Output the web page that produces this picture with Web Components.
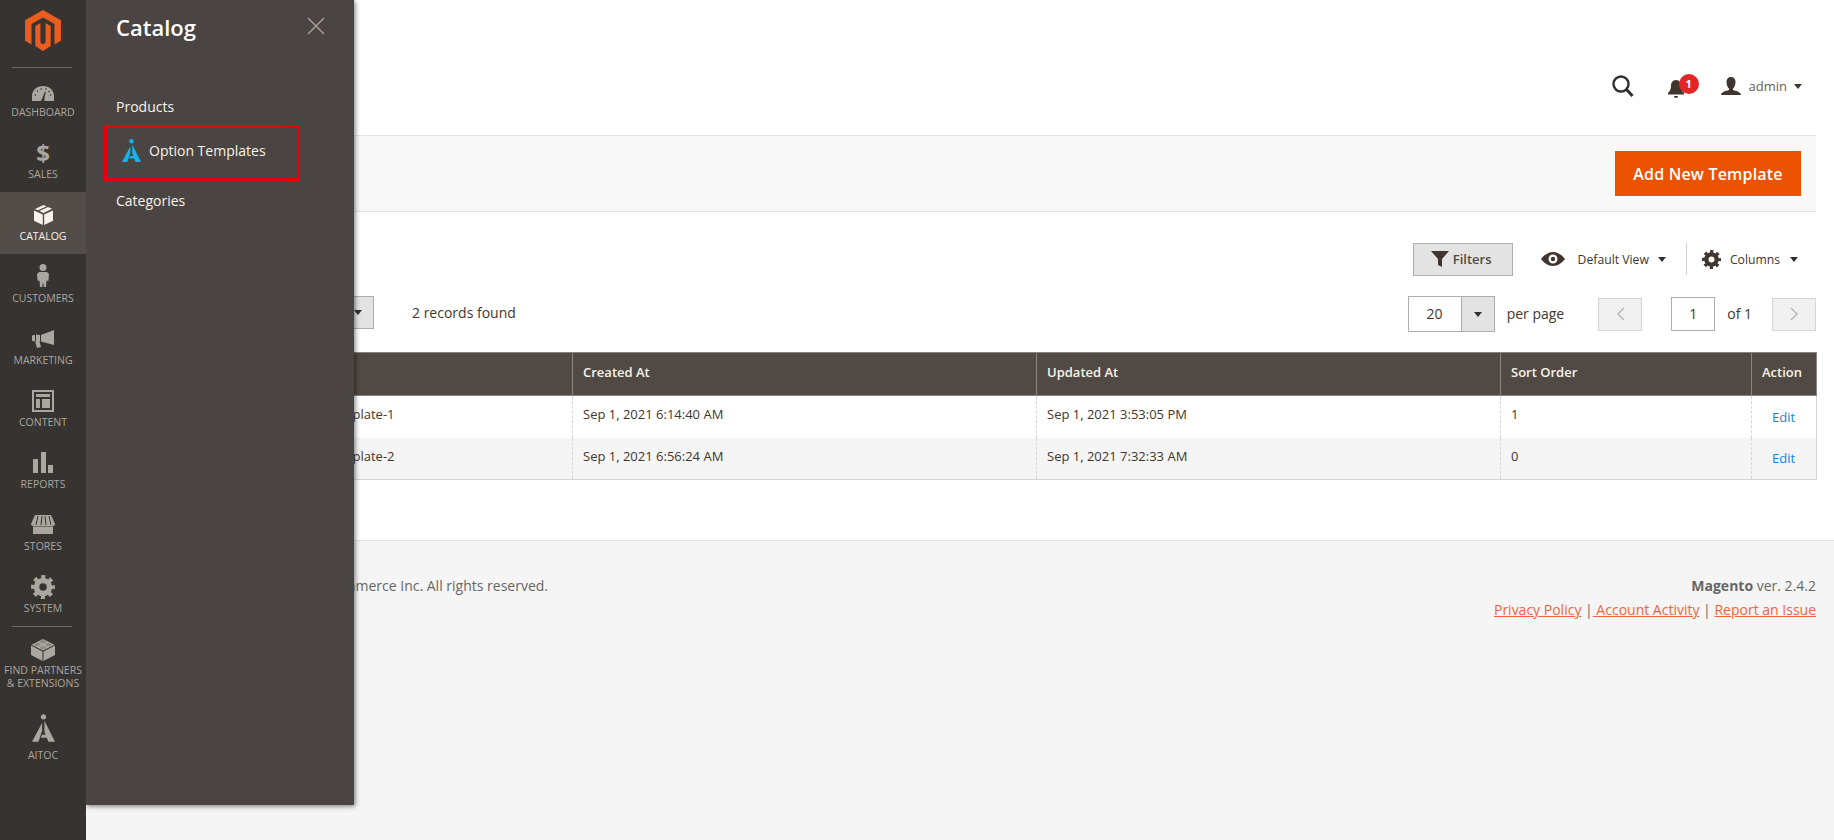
<!DOCTYPE html>
<html>
<head>
<meta charset="utf-8">
<title>Option Templates</title>
<style>
html, body { margin: 0; height: 100%; }
body { font-family: "Open Sans", "Liberation Sans", sans-serif; font-size: 14px; color: #41362f; overflow: hidden; background: #fff; }
svg { display: block; }
</style>
</head>
<body>
<admin-app>
  <admin-sidebar slot="sidebar">
    <nav-item label="Dashboard">
      <svg width="22" height="15" viewBox="0 0 22 15" fill="currentColor" style="margin-top:6px"><path fill-rule="evenodd" d="M11 0C5 0 0 4 0 10v5h8.800l.9-1.500L13 5.500l.8.300-1.500 7.700.3 1.500H22v-5C22 4 17 0 11 0z"/><g fill="#373330"><circle cx="3.500" cy="9" r=".8"/><circle cx="5.500" cy="5" r=".8"/><circle cx="9" cy="3" r=".8"/><circle cx="14" cy="3" r=".8"/><circle cx="18.500" cy="9" r=".8"/><circle cx="17" cy="5.500" r=".8"/></g></svg>
    </nav-item>
    <nav-item label="Sales"><span style="font:700 24px/24px 'Open Sans',sans-serif">$</span></nav-item>
    <nav-item label="Catalog" active>
      <svg width="19" height="20" viewBox="0 0 19 20" fill="currentColor"><path d="M0 5.500 8.800 9.400V20L0 15.800zM19 5.500 10.200 9.400V20L19 15.800zM9.500 0 12.500 1.300 4 5.200 1 4zM14 2 18 3.800 9.500 7.900 5.500 6z"/></svg>
    </nav-item>
    <nav-item label="Customers">
      <svg width="12" height="23" viewBox="0 0 12 23" fill="currentColor" style="margin-bottom:2px"><circle cx="6" cy="3.500" r="3.500"/><path d="M2 8h8l2 2-.6 7-1.900-.5L9 23H6.800L6 18l-.8 5H3l-.5-6.500-1.900.5L0 10z"/></svg>
    </nav-item>
    <nav-item label="Marketing">
      <svg width="22" height="18" viewBox="0 0 22 18" fill="currentColor"><path d="M22 0v15L9 11.500V5zM0 5.500 3 4.800v6.700L0 10.800zM4 4.600 8 5v6.500l-.5 0L9 17l-4 1-1.800-6.600L4 11.300z"/></svg>
    </nav-item>
    <nav-item label="Content">
      <svg width="22" height="22" viewBox="0 0 22 22" fill="currentColor"><path fill-rule="evenodd" d="M0 0h22v22H0zM2 2v18h18V2z"/><path d="M4 4h14v3H4zM4 9h4v9H4zM10 9h8v9h-8z"/></svg>
    </nav-item>
    <nav-item label="Reports">
      <svg width="20" height="21" viewBox="0 0 20 21" fill="currentColor"><path d="M0 7h5v14H0zM8 0h5v21H8zM15 13h5v8h-5z"/></svg>
    </nav-item>
    <nav-item label="Stores">
      <svg width="24" height="19" viewBox="0 0 24 19" fill="currentColor"><path d="M4 0h16l4 9c0 1.500-1.500 2-3 2H3c-1.500 0-3-.5-3-2z"/><path d="M2 11.500h20V19H2z"/><path d="M7 1 5 10M11 1l-1 9M14 1l1 9M18 1l2 9" stroke="#373330" stroke-width="1"/></svg>
    </nav-item>
    <nav-item label="System">
      <svg width="24" height="24" viewBox="0 0 24 24" fill="none" stroke="currentColor"><circle cx="12" cy="12" r="6.500" stroke-width="5.500"/><circle cx="12" cy="12" r="10" stroke-width="4" stroke-dasharray="4 3.850" stroke-dashoffset="2"/></svg>
    </nav-item>
    <sidebar-divider></sidebar-divider>
    <nav-item label="Find Partners<br>&amp; Extensions" style="--item-h:74px;--icon-h:24px">
      <svg width="24" height="23" viewBox="0 0 24 23" fill="currentColor"><path d="M0 7.500 11.500 13.500V23L0 17zM24 7.500 12.500 13.500V23L24 17z"/><path d="M12 1 23.500 6.800 12 12.500.5 6.800z"/><g fill="#8f8b84"><ellipse cx="12" cy="3.500" rx="3" ry="1.500"/><ellipse cx="6.500" cy="6.500" rx="3" ry="1.500"/><ellipse cx="17.500" cy="6.500" rx="3" ry="1.500"/><ellipse cx="12" cy="9.500" rx="3" ry="1.500"/></g></svg>
    </nav-item>
    <nav-item label="Aitoc" style="--item-h:68px;--icon-h:33px;--item-mt:2px">
      <aitoc-logo size="28" style="margin-bottom:3px"></aitoc-logo>
    </nav-item>
  </admin-sidebar>

  <catalog-flyout slot="flyout" heading="Catalog">
    <flyout-link>Products</flyout-link>
    <flyout-link marked><aitoc-logo slot="icon" size="23" style="color:#12b5ea"></aitoc-logo>Option Templates</flyout-link>
    <flyout-link>Categories</flyout-link>
  </catalog-flyout>

  <top-bar></top-bar>
  <page-actions>Add New Template</page-actions>
  <grid-tools></grid-tools>
  <pager-row></pager-row>
  <data-grid></data-grid>
  <page-footer slot="footer"></page-footer>
</admin-app>

<script>
// small helper, every component just sets its markup in the constructor
class Base extends HTMLElement {
  constructor() {
    super();
    this.attachShadow({ mode: 'open' });
    this.shadowRoot.innerHTML = this.markup();
  }
  markup() { return ''; }
}

class AdminApp extends Base {
  markup() {
    return `<style>
      :host { display: flex; height: 840px; position: relative; overflow: hidden; }
      .main { flex: 1; min-width: 0; display: flex; flex-direction: column; background: #fff; }
      .page { width: 1730px; box-sizing: border-box; height: 540px; flex: none; }
    </style>
    <slot name="sidebar"></slot>
    <slot name="flyout"></slot>
    <div class="main">
      <div class="page"><slot></slot></div>
      <slot name="footer"></slot>
    </div>`;
  }
}

class AdminSidebar extends Base {
  markup() {
    return `<style>
      :host { display: block; width: 86px; flex: none; background: #373330; color: #aaa6a0; position: relative; z-index: 2; }
      .logo { height: 68px; display: flex; justify-content: center; padding-top: 10px; box-sizing: border-box; position: relative; }
      .logo::after { content: ""; position: absolute; left: 12px; right: 14px; bottom: 0; height: 1px; background: #736963; }
    </style>
    <div class="logo">
      <svg width="36" height="41" viewBox="0 0 35 40" fill="#eb5d1e" style="display:block">
        <path d="M17.500 0 35 10V30L28.700 33.600V13.600L17.500 7.200 6.300 13.600V33.600L0 30V10z"/>
        <path d="M10 15.500 15 12.700V32L17.500 33.500 20 32V12.700L25 15.500V35L17.500 40 10 35z"/>
      </svg>
    </div>
    <slot></slot>`;
  }
}

class SidebarDivider extends Base {
  markup() {
    return `<style>:host { display: block; height: 1px; margin: 0 14px 0 12px; background: #736963; }</style>`;
  }
}

class NavItem extends Base {
  markup() {
    return `<style>
      :host { display: flex; flex-direction: column; align-items: center; height: var(--item-h, 62px); margin-top: var(--item-mt, 0); box-sizing: border-box; padding-top: 10px; }
      :host([active]) { background: #524d49; color: #f7f3eb; }
      .icon { height: var(--icon-h, 25px); display: flex; align-items: center; justify-content: center; }
      .label { font-size: 10.500px; line-height: 13px; text-transform: uppercase; text-align: center; margin-top: 3px; white-space: nowrap; }
    </style>
    <div class="icon"><slot></slot></div>
    <div class="label">${this.getAttribute('label')}</div>`;
  }
}

class AitocLogo extends Base {
  markup() {
    const s = this.getAttribute('size') || 24;
    return `<style>:host { display: block; }</style>
    <svg width="${Math.round(s * 0.82)}" height="${s}" viewBox="0 0 20 24" fill="currentColor" style="display:block">
      <circle cx="10" cy="2.300" r="2.300"/>
      <path d="M8.800 7.500V14.500C7.500 17.500 6.800 21 5.500 24H0z"/>
      <path d="M10.800 5.800 20 24H14.300L12.800 20.500H7.600L8.800 17.800H11.800L10.800 15z"/>
    </svg>`;
  }
}

class CatalogFlyout extends Base {
  markup() {
    return `<style>
      :host { display: block; position: absolute; left: 86px; top: 0; width: 268px; height: 805px; background: #4a4542; color: #f7f3eb; box-shadow: 1px 1px 5px rgba(0,0,0,.55); z-index: 1; box-sizing: border-box; padding: 10px 0 0 30px; }
      h2 { margin: 0; font-size: 22px; line-height: 34px; font-weight: 600; color: #fff; }
      .close { position: absolute; left: 221px; top: 17px; }
      .list { margin-top: 43px; margin-left: -12px; display: flex; flex-direction: column; }
    </style>
    <h2>${this.getAttribute('heading')}</h2>
    <svg class="close" width="18" height="18" viewBox="0 0 18 18" stroke="#a79d95" stroke-width="1.500" style="display:block"><path d="M1 1l16 16M17 1 1 17"/></svg>
    <div class="list"><slot></slot></div>`;
  }
}

class FlyoutLink extends Base {
  markup() {
    return `<style>
      :host { display: flex; align-items: center; height: 38px; padding-left: 12px; font-size: 14px; }
      :host([marked]) { width: 196px; height: 56px; padding: 0 0 6px 15px; box-sizing: border-box; border: 3px solid #e8000f; gap: 8px; }
      ::slotted(aitoc-logo) { flex: none; }
    </style>
    <slot name="icon"></slot><slot></slot>`;
  }
}

class TopBar extends Base {
  markup() {
    return `<style>
      :host { display: flex; align-items: center; height: 135px; box-sizing: border-box; padding: 37px 0 0 0; color: #41362f; justify-content: flex-end; }
      .search { margin-right: 34px; }
      .bell { position: relative; margin-right: 22px; width: 31px; height: 24px; }
      .badge { position: absolute; left: 11px; top: 0; width: 20px; height: 20px; border-radius: 50%; background: #e22626; color: #fff; font-size: 11px; font-weight: 700; line-height: 20px; text-align: center; }
      .user { display: flex; align-items: center; font-size: 13px; color: #676056; padding-right: 14px; }
      .name { margin: 0 7px 0 8px; }
      .caret { border: 4px solid transparent; border-top: 5px solid #41362f; border-bottom: 0; }
    </style>
    <svg class="search" width="22" height="22" viewBox="0 0 22 22" fill="none" stroke="#303030" stroke-width="2.400" style="display:block"><circle cx="9" cy="9" r="7.500"/><path d="M14.500 14.500 20.500 21" stroke-width="3"/></svg>
    <div class="bell">
      <svg width="16" height="20" viewBox="0 0 16 20" fill="#41362f" style="display:block;margin-top:5px"><path d="M8 1C4.500 1 3 4 3 7c0 3-1 5-3 7v1.500h16V14c-2-2-3-4-3-7 0-3-1.500-6-5-6zM6 17h4a2 2 0 0 1-4 0z"/></svg>
      <span class="badge">1</span>
    </div>
    <div class="user">
      <svg width="20" height="18" viewBox="0 0 20 18" fill="#41362f" style="display:block"><path d="M10 0c3 0 4.500 2 4.500 5s-1.500 6-2.500 6.500v1.500c2 1 8 1.500 8 5H0c0-3.500 6-4 8-5v-1.500C7 11 5.500 8 5.500 5S7 0 10 0z"/></svg>
      <span class="name">admin</span><i class="caret"></i>
    </div>`;
  }
}

class PageActions extends Base {
  markup() {
    return `<style>
      :host { display: flex; justify-content: flex-end; align-items: center; height: 77px; box-sizing: border-box; background: #f8f8f8; border-top: 1px solid #e3e3e3; border-bottom: 1px solid #e3e3e3; padding-right: 15px; }
      button { width: 186px; height: 45px; border: 0; background: #eb5202; color: #fff; font: 600 16px "Open Sans", sans-serif; padding: 0; letter-spacing: .2px; }
    </style>
    <button><slot></slot></button>`;
  }
}

class GridTools extends Base {
  markup() {
    return `<style>
      :host { display: flex; align-items: center; justify-content: flex-end; height: 64px; box-sizing: border-box; padding: 30px 18px 0 0; font-size: 12.200px; color: #41362f; }
      .filters { width: 100px; height: 33px; box-sizing: border-box; border: 1px solid #adadad; background: #e3e3e3; display: flex; align-items: center; justify-content: center; gap: 4px; padding-right: 3px; font-size: 13px; font-weight: 600; margin-right: 28px; color: #514943; }
      .view { display: flex; align-items: center; }
      .sep { width: 1px; height: 32px; background: #d1d1d1; margin: 0 15px 0 20px; }
      .caret { border: 4px solid transparent; border-top: 5px solid #303030; border-bottom: 0; margin-left: 9px; }
    </style>
    <div class="filters">
      <svg width="18" height="16" viewBox="0 0 18 16" fill="#41362f" style="display:block"><path d="M0 0h18l-7 8v8l-4-2V8z"/></svg>Filters
    </div>
    <div class="view">
      <svg width="24" height="14" viewBox="0 0 24 14" style="display:block"><path fill="#41362f" fill-rule="evenodd" d="M12 0c5 0 9.500 3.500 12 7-2.500 3.500-7 7-12 7S2.500 10.500 0 7c2.500-3.500 7-7 12-7zm0 2.500a4.500 4.500 0 1 0 0 9 4.500 4.500 0 0 0 0-9z"/><circle cx="12" cy="7" r="2.200" fill="#41362f"/></svg>
      <span style="margin-left:13px">Default View</span><i class="caret"></i>
    </div>
    <div class="sep"></div>
    <div class="view">
      <svg width="19" height="19" viewBox="0 0 24 24" fill="none" stroke="#41362f" style="display:block"><circle cx="12" cy="12" r="6.500" stroke-width="5.500"/><circle cx="12" cy="12" r="10" stroke-width="4" stroke-dasharray="4 3.850" stroke-dashoffset="2"/></svg>
      <span style="margin-left:9px">Columns</span><i class="caret" style="margin-left:10px"></i>
    </div>`;
  }
}

class PagerRow extends Base {
  markup() {
    return `<style>
      :host { display: flex; align-items: center; height: 76px; box-sizing: border-box; margin-left: 30px; font-size: 14px; color: #41362f; }
      .mass { margin: 0 0 3px 226px; width: 32px; height: 33px; box-sizing: border-box; border: 1px solid #adadad; background: #e3e3e3; display: flex; align-items: center; justify-content: center; }
      .found { margin: 0 0 4px 38px; }
      .spacer { flex: 1; }
      .sel { display: flex; width: 87px; height: 36px; box-sizing: border-box; border: 1px solid #adadad; }
      .sel b { flex: 1; font-weight: 400; text-align: center; line-height: 33px; }
      .sel span { width: 32px; background: #e3e3e3; border-left: 1px solid #adadad; display: flex; align-items: center; justify-content: center; }
      .caret { border: 4px solid transparent; border-top: 5px solid #303030; border-bottom: 0; display: block; }
      .per { margin: 0 34px 2px 12px; }
      .btn { width: 44px; height: 33px; box-sizing: border-box; border: 1px solid #d5d5d5; background: #f0f0f0; display: flex; align-items: center; justify-content: center; }
      .num { width: 44px; height: 34px; box-sizing: border-box; border: 1px solid #adadad; margin: 0 12px 0 29px; text-align: center; line-height: 31px; }
      .of { margin: 0 20px 2px 0; }
    </style>
    <div class="mass"><i class="caret"></i></div>
    <span class="found">2 records found</span>
    <span class="spacer"></span>
    <div class="sel"><b>20</b><span><i class="caret"></i></span></div>
    <span class="per">per page</span>
    <div class="btn"><svg width="9" height="14" viewBox="0 0 9 14" fill="none" stroke="#b5b0aa" stroke-width="1.300" style="display:block"><path d="M8 1 2 7l6 6"/></svg></div>
    <div class="num">1</div>
    <span class="of">of 1</span>
    <div class="btn"><svg width="9" height="14" viewBox="0 0 9 14" fill="none" stroke="#b5b0aa" stroke-width="1.300" style="display:block"><path d="M1 1l6 6-6 6"/></svg></div>`;
  }
}

const rows = [
  ['Template-1', 'Sep 1, 2021 6:14:40 AM', 'Sep 1, 2021 3:53:05 PM', '1'],
  ['Template-2', 'Sep 1, 2021 6:56:24 AM', 'Sep 1, 2021 7:32:33 AM', '0']
];

class DataGrid extends Base {
  markup() {
    const body = rows.map((r) => `<tr>
      <td></td><td class="name">${r[0]}</td><td>${r[1]}</td><td>${r[2]}</td><td>${r[3]}</td>
      <td class="act"><a>Edit</a></td></tr>`).join('');
    return `<style>
      :host { display: block; margin-left: 30px; }
      table { border-collapse: collapse; table-layout: fixed; width: 1700px; font-size: 13px; color: #41362f; }
      th { height: 43px; padding: 0 10px 4px; box-sizing: border-box; background: #514943; color: #f7f3eb; font-weight: 600; text-align: left; border: 1px solid #8a837f; }
      td { height: 42px; padding: 0 10px 5px; box-sizing: border-box; border-left: 1px dashed #d6d6d6; border-right: 1px dashed #d6d6d6; vertical-align: middle; }
      tr:nth-child(even) td { background: #f5f5f5; }
      tr:last-child td { border-bottom: 1px solid #d6d6d6; }
      td:last-child { border-right: 1px solid #d6d6d6; }
      td.name { padding-left: 13px; }
      .act { padding: 0 0 0 20px; }
      a { color: #1584e0; }
    </style>
    <table>
      <colgroup><col style="width:196px"><col style="width:260px"><col style="width:464px"><col style="width:464px"><col style="width:251px"><col style="width:65px"></colgroup>
      <thead><tr><th></th><th></th><th>Created At</th><th>Updated At</th><th>Sort Order</th><th>Action</th></tr></thead>
      <tbody>${body}</tbody>
    </table>`;
  }
}

class PageFooter extends Base {
  markup() {
    return `<style>
      :host { display: flex; justify-content: space-between; flex: 1; background: #f5f5f5; border-top: 1px solid #e3e3e3; box-sizing: border-box; padding: 33px 18px 0 60px; font-size: 14px; color: #666; line-height: 24px; }
      .right { text-align: right; }
      a { color: #f0653a; text-decoration: underline; }
    </style>
    <div>Copyright © 2021 Magento Commerce Inc. All rights reserved.</div>
    <div class="right">
      <div><b>Magento</b> ver. 2.4.2</div>
      <div><a>Privacy Policy</a> |<a> Account Activity</a> | <a>Report an Issue</a></div>
    </div>`;
  }
}

customElements.define('admin-app', AdminApp);
customElements.define('admin-sidebar', AdminSidebar);
customElements.define('sidebar-divider', SidebarDivider);
customElements.define('nav-item', NavItem);
customElements.define('aitoc-logo', AitocLogo);
customElements.define('catalog-flyout', CatalogFlyout);
customElements.define('flyout-link', FlyoutLink);
customElements.define('top-bar', TopBar);
customElements.define('page-actions', PageActions);
customElements.define('grid-tools', GridTools);
customElements.define('pager-row', PagerRow);
customElements.define('data-grid', DataGrid);
customElements.define('page-footer', PageFooter);
</script>
</body>
</html>
